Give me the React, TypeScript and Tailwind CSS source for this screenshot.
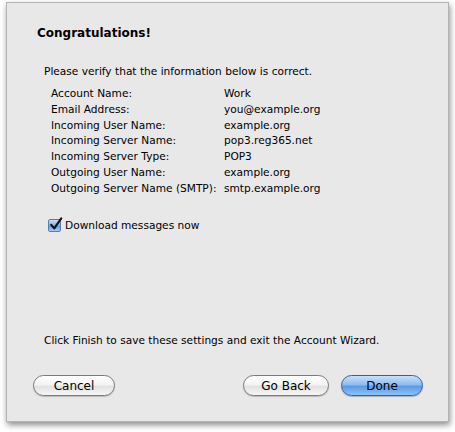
import React from "react";

const rows: [string, string][] = [
  ["Account Name:", "Work"],
  ["Email Address:", "you@example.org"],
  ["Incoming User Name:", "example.org"],
  ["Incoming Server Name:", "pop3.reg365.net"],
  ["Incoming Server Type:", "POP3"],
  ["Outgoing User Name:", "example.org"],
  ["Outgoing Server Name (SMTP):", "smtp.example.org"],
];

function AquaButton({ label, primary, className }: { label: string; primary?: boolean; className?: string }) {
  return (
    <div
      className={
        "h-[21px] rounded-full border flex items-center justify-center text-[12px] text-black " +
        (primary
          ? "border-[#3b5f9a] bg-[linear-gradient(to_bottom,#c9e0fb_0%,#8dbdf2_45%,#5b9ae6_55%,#8cc4f8_100%)] shadow-[0_1px_1px_rgba(0,0,0,0.25)] "
          : "border-[#7a7a7a] bg-[linear-gradient(to_bottom,#ffffff_0%,#f4f4f4_45%,#e2e2e2_55%,#f6f6f6_100%)] shadow-[0_1px_1px_rgba(0,0,0,0.2)] ") +
        (className ?? "")
      }
    >
      {label}
    </div>
  );
}

export default function App() {
  return (
    <div className="w-[455px] h-[432px] bg-white pt-[2px] pl-[6px]" style={{ fontFamily: '"DejaVu Sans", sans-serif' }}>
      <div className="w-[443px] h-[420px] bg-[#e8e8e8] border border-[#b4b4b4] shadow-[1px_3px_6px_rgba(0,0,0,0.45)] flex flex-col">
        <div className="pl-[30px] pt-[21px] text-[12px] font-bold text-black leading-[18px]">Congratulations!</div>
        <div className="pl-[37px] pt-[22px] text-[10.6px] text-black leading-[15px]">
          Please verify that the information below is correct.
        </div>
        <div className="pl-[44px] pt-[7px] text-[10.6px] text-black">
          {rows.map(([k, v]) => (
            <div key={k} className="flex leading-[15.75px]">
              <div className="w-[173px]">{k}</div>
              <div>{v}</div>
            </div>
          ))}
        </div>
        <div className="pl-[41px] pt-[22px] flex items-center gap-[4px] text-[10.6px] text-black">
          <div className="w-[13px] h-[13px] rounded-[2px] border border-[#5a7aa8] bg-[linear-gradient(to_bottom,#c8defa,#7fb0ea_50%,#5d97e0_51%,#a6cdf5)] relative">
            <svg viewBox="0 0 16 16" className="absolute left-[0px] top-[-3px] w-[14px] h-[14px]">
              <path d="M2.5 9 L6 13 L14 1.5" fill="none" stroke="#111" strokeWidth="2.4" strokeLinecap="round" strokeLinejoin="round" />
            </svg>
          </div>
          <span className="leading-[15px]">Download messages now</span>
        </div>
        <div className="pl-[37px] pt-[100px] text-[10.6px] text-black leading-[15px]">
          Click Finish to save these settings and exit the Account Wizard.
        </div>
        <div className="flex pl-[26px] pr-[25px] pt-[27px] items-center">
          <AquaButton label="Cancel" className="w-[82px]" />
          <div className="flex-1" />
          <AquaButton label="Go Back" className="w-[86px]" />
          <AquaButton label="Done" primary className="w-[82px] ml-[12px]" />
        </div>
      </div>
    </div>
  );
}
